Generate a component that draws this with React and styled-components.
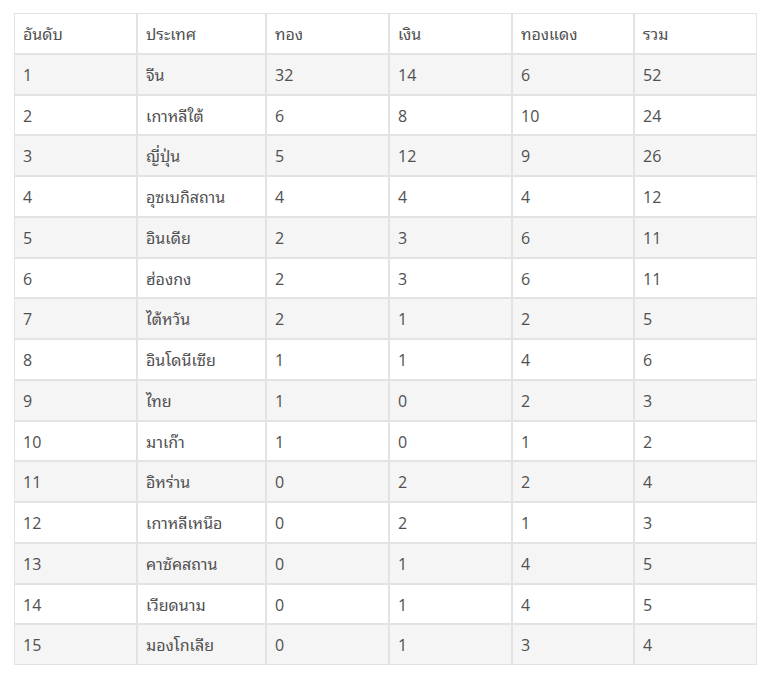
import React from "react";
import styled, { createGlobalStyle } from "styled-components";

const Global = createGlobalStyle`
  html, body { margin: 0; padding: 0; background: #ffffff; }
  body { font-family: "Open Sans", "Noto Sans Thai Looped", "Noto Sans Thai", "Noto Sans", sans-serif; }
`;

const Page = styled.div`
  padding: 13px 12px 0 14px;
`;

const Table = styled.table`
  border-collapse: separate;
  border-spacing: 0;
  width: 743px;
  table-layout: fixed;
  color: #505050;
  font-size: 16px;
`;

const Col = styled.col`
  width: ${(p) => p.$w}px;
`;

const Row = styled.tr`
  background: ${(p) => (p.$shaded ? "#f5f5f5" : "#ffffff")};
`;

const Cell = styled.td`
  border: 1px solid #e3e3e3;
  padding: 10px 8px 8px;
  line-height: 20.75px;
  height: 20.75px;
  text-align: left;
  font-weight: 400;
  white-space: nowrap;
  vertical-align: middle;
`;

const HeadCell = styled(Cell).attrs({ as: "th" })``;

const headers = ["อันดับ", "ประเทศ", "ทอง", "เงิน", "ทองแดง", "รวม"];

const rows = [
  [1, "จีน", 32, 14, 6, 52],
  [2, "เกาหลีใต้", 6, 8, 10, 24],
  [3, "ญี่ปุ่น", 5, 12, 9, 26],
  [4, "อุซเบกิสถาน", 4, 4, 4, 12],
  [5, "อินเดีย", 2, 3, 6, 11],
  [6, "ฮ่องกง", 2, 3, 6, 11],
  [7, "ไต้หวัน", 2, 1, 2, 5],
  [8, "อินโดนีเซีย", 1, 1, 4, 6],
  [9, "ไทย", 1, 0, 2, 3],
  [10, "มาเก๊า", 1, 0, 1, 2],
  [11, "อิหร่าน", 0, 2, 2, 4],
  [12, "เกาหลีเหนือ", 0, 2, 1, 3],
  [13, "คาซัคสถาน", 0, 1, 4, 5],
  [14, "เวียดนาม", 0, 1, 4, 5],
  [15, "มองโกเลีย", 0, 1, 3, 4],
];

const widths = [123, 129, 123, 123, 122, 123];

export default function App() {
  return (
    <Page>
      <Global />
      <Table>
        <colgroup>
          {widths.map((w, i) => (
            <Col key={i} $w={w} />
          ))}
        </colgroup>
        <thead>
          <Row>
            {headers.map((h) => (
              <HeadCell key={h}>{h}</HeadCell>
            ))}
          </Row>
        </thead>
        <tbody>
          {rows.map((r, i) => (
            <Row key={r[0]} $shaded={i % 2 === 0}>
              {r.map((v, j) => (
                <Cell key={j}>{v}</Cell>
              ))}
            </Row>
          ))}
        </tbody>
      </Table>
    </Page>
  );
}
